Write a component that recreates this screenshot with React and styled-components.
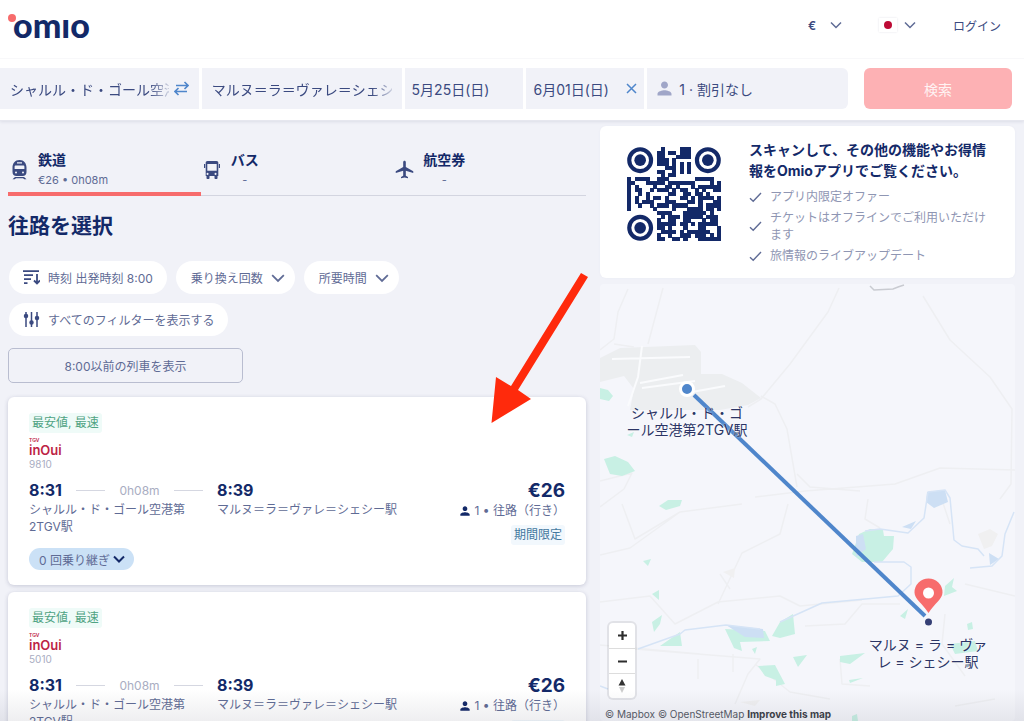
import React from "react";
import styled, { createGlobalStyle } from "styled-components";
import { MdPerson, MdLocalAirport } from "react-icons/md";

const c = {
  navy: "#132968",
  ink: "#3b4a80",
  text: "#5f6b95",
  muted: "#8f96b3",
  faint: "#a9adc2",
  line: "#d3d5e0",
  page: "#f1f2f8",
  coral: "#f76c6c",
  blue: "#4f86cb",
};

const Global = createGlobalStyle`
  * { box-sizing: border-box; }
  body { margin: 0; background: ${c.page}; }
  body, button, input, select {
    font-family: Inter, "Noto Sans CJK JP", sans-serif;
    color: ${c.text};
  }
  button, input, select { border: 0; margin: 0; padding: 0; background: none; font-size: 12px; }
  button { cursor: pointer; }
  h1, h2, p, ul { margin: 0; padding: 0; }
  svg { display: block; flex: none; }
`;

const Page = styled.div`
  position: relative;
  display: flex;
  flex-direction: column;
  height: 100vh;
  overflow: hidden;
`;

/* Header */
const Header = styled.header`
  background: #fff;
  border-bottom: 1px solid #e6e7ef;
  box-shadow: 0 1px 3px rgba(40, 45, 90, 0.1);
`;
const Nav = styled.nav`
  display: flex;
  align-items: center;
  height: 59px;
  padding: 0 23px 8px 8px;
  border-bottom: 1px solid #f8f8fa;
`;
const Logo = styled.a`
  position: relative;
  margin-right: auto;
  padding-left: 5px;
  color: ${c.navy};
  font-family: Lato, sans-serif;
  font-size: 34px;
  line-height: 36px;
  font-weight: 900;
  text-decoration: none;
  &::before {
    content: "";
    position: absolute;
    left: 0;
    top: 7px;
    width: 8px;
    height: 8px;
    border-radius: 50%;
    background: ${c.coral};
  }
`;
const Picker = styled.label`
  display: flex;
  align-items: center;
  gap: 14px;
  margin-right: 37px;
`;
const CurrencySelect = styled.select`
  appearance: none;
  width: 8px;
  color: ${c.ink};
  font-weight: 600;
`;
const FlagButton = styled.button`
  display: flex;
  align-items: center;
  gap: 7px;
  margin-right: 37px;
`;
const Flag = styled.span`
  display: grid;
  place-items: center;
  width: 18px;
  height: 14px;
  background: #fff;
  box-shadow: 0 0 2px #e2e2e8;
  &::after {
    content: "";
    width: 8px;
    height: 8px;
    border-radius: 50%;
    background: #bd0a35;
  }
`;
const Login = styled.a`
  font-size: 12px;
  color: ${c.ink};
  text-decoration: none;
`;
const SearchForm = styled.form`
  display: grid;
  grid-template-columns: 199fr 200fr 119fr 118fr 201fr 161fr;
  gap: 3px;
  padding: 9px 12px 11px 0;
`;
const Field = styled.div`
  display: flex;
  align-items: center;
  gap: 5px;
  height: 41px;
  min-width: 0;
  padding: 0 ${(p) => (p.$narrow ? 7 : 10)}px;
  background: ${c.page};
  border-radius: ${(p) => (p.$last ? "0 6px 6px 0" : "0")};
`;
const FieldInput = styled.input`
  flex: 1;
  width: 100%;
  min-width: 0;
  font-size: 14px;
  color: ${c.ink};
  outline: 0;
  mask-image: linear-gradient(to right, #000 calc(100% - 20px), rgba(0, 0, 0, 0.2));
`;
const FieldButton = styled.button`
  flex: 1;
  display: flex;
  align-items: center;
  gap: 4px;
  font-size: 14px;
  color: ${c.ink};
  white-space: nowrap;
`;
const IconButton = styled.button`
  display: grid;
  place-items: center;
  color: ${c.blue};
`;
const SearchButton = styled.button`
  height: 41px;
  margin-left: 13px;
  border-radius: 6px;
  background: #fdb1b4;
  color: #fff3f3;
  font-size: 14px;
`;

/* Columns */
const Main = styled.main`
  flex: 1;
  min-height: 0;
  display: grid;
  grid-template-columns: minmax(0, 578fr) minmax(0, 415fr);
  gap: 14px;
  padding: 0 9px 0 8px;
`;
const Results = styled.section`
  display: flex;
  flex-direction: column;
  min-height: 0;
  overflow-y: auto;
  scrollbar-width: none;
  margin: 0 -6px;
  padding: 0 6px;
`;
const Side = styled.aside`
  display: flex;
  flex-direction: column;
  gap: 6px;
  min-height: 0;
  padding-top: 5px;
`;

const Tabs = styled.div`
  flex: none;
  display: grid;
  grid-template-columns: repeat(3, 1fr);
  height: 75px;
  box-shadow: inset 0 -1px ${c.line};
`;
const Tab = styled.button`
  display: flex;
  align-items: center;
  gap: 10px;
  padding: 26px 0 0 2px;
  border-bottom: 4px solid ${(p) => (p.$active ? c.coral : "transparent")};
  color: ${c.ink};
  text-align: left;
`;
const TabIcon = styled.span`
  display: grid;
  justify-content: center;
  width: 18px;
`;
const TabText = styled.span`
  display: grid;
  line-height: 20px;
  justify-items: ${(p) => (p.$empty ? "center" : "start")};
  strong { font-size: 14px; color: ${c.navy}; }
  small { font-size: 11px; line-height: 20px; color: ${c.text}; }
`;
const Title = styled.h1`
  margin: 15px 0 20px;
  font-size: 21px;
  line-height: 30px;
  font-weight: 700;
  color: ${c.navy};
`;
const Filters = styled.div`
  display: flex;
  flex-wrap: wrap;
  gap: 9px;
  max-width: 420px;
  margin-left: 1px;
`;
const Chip = styled.button`
  display: flex;
  align-items: center;
  gap: 8px;
  height: 33px;
  padding: 0 ${(p) => (p.$menu ? "10px 0 15px" : "14px 0 14px")};
  border-radius: 17px;
  background: #fff;
`;
const EarlierButton = styled.button`
  flex: none;
  align-self: flex-start;
  width: 235px;
  height: 35px;
  margin: 12px 0 14px;
  border: 1px solid #b9bdd0;
  border-radius: 5px;
`;

/* Trip cards */
const Card = styled.article`
  flex: none;
  display: grid;
  grid-template-columns: 188px minmax(0, 1fr) auto;
  padding: 16px 21px 15px;
  margin-bottom: 7px;
  border-radius: 6px;
  background: #fff;
  box-shadow: 0 1px 4px rgba(50, 55, 100, 0.22);
`;
const CardHead = styled.div`
  grid-column: 1 / -1;
  display: flex;
  flex-direction: column;
  align-items: flex-start;
`;
const Tag = styled.span`
  padding: 0 3px;
  border-radius: 3px;
  font-size: 12px;
  line-height: 20px;
  color: ${(p) => (p.$deal ? "#45789f" : "#4fa383")};
  background: ${(p) => (p.$deal ? "#f2f8fd" : "#effbf8")};
`;
const Carrier = styled.span`
  display: grid;
  margin-top: 4px;
  color: #bd2345;
  font-size: 13px;
  line-height: 13px;
  font-weight: 600;
  small { font-size: 5px; line-height: 7px; }
`;
const TrainNo = styled.span`
  margin-bottom: 9px;
  font-size: 10px;
  line-height: 14px;
  color: ${c.faint};
`;
const Times = styled.div`
  display: flex;
  align-items: center;
  gap: 14px;
  padding-right: 14px;
  font-size: 12px;
  line-height: 21px;
  color: ${c.faint};
`;
const Time = styled.strong`
  font-size: 16px;
  color: ${c.navy};
`;
const Rule = styled.span`
  flex: 1;
  height: 1px;
  background: #d5d7e1;
`;
const Station = styled.p`
  padding-right: 24px;
  font-size: 12px;
  line-height: 17px;
`;
const Fare = styled.div`
  grid-column: 3;
  grid-row: 2 / span 2;
  display: flex;
  flex-direction: column;
  align-items: flex-end;
  font-size: 12px;
  line-height: 17px;
`;
const Price = styled.strong`
  font-size: 19px;
  line-height: 22px;
  color: ${c.navy};
`;
const FareNote = styled.span`
  display: flex;
  align-items: center;
  gap: 3px;
  margin-bottom: 6px;
  svg { color: ${c.navy}; }
`;
const Transfers = styled.button`
  justify-self: start;
  display: flex;
  align-items: center;
  gap: 3px;
  height: 22px;
  margin-top: 13px;
  padding: 0 9px 0 10px;
  border-radius: 11px;
  background: #cbe1f6;
  white-space: nowrap;
  svg { color: ${c.navy}; }
`;

/* App promotion */
const Promo = styled.section`
  display: flex;
  gap: 28px;
  padding: 13px 24px 14px 27px;
  border-radius: 6px;
  background: #fff;
  box-shadow: 0 0 2px #e9eaf2;
`;
const QrBox = styled.div`
  padding-top: 8px;
`;
const PromoTitle = styled.h2`
  margin-bottom: 7px;
  font-size: 14px;
  line-height: 21px;
  font-weight: 700;
  color: ${c.navy};
`;
const Perks = styled.ul`
  display: grid;
  gap: 4px;
  list-style: none;
`;
const Perk = styled.li`
  display: flex;
  align-items: center;
  gap: 8px;
  font-size: 12px;
  line-height: 17px;
  color: ${c.muted};
  svg { color: ${c.text}; }
`;

/* Map */
const MapBox = styled.section`
  position: relative;
  flex: 1;
  min-height: 0;
  overflow: hidden;
  border-radius: 4px;
  background: #f5f6fb;
`;
const MapLabel = styled.span`
  position: absolute;
  left: ${(p) => p.$x}px;
  top: ${(p) => p.$y}px;
  transform: translateX(-50%);
  font-size: 14px;
  line-height: 17px;
  color: #2c3566;
  text-align: center;
  white-space: nowrap;
  text-shadow: 0 0 2px #fff;
`;
const ZoomGroup = styled.div`
  position: absolute;
  left: 9px;
  bottom: 23px;
  display: grid;
  width: 26px;
  border-radius: 4px;
  background: #fff;
  box-shadow: 0 0 0 2px rgba(0, 0, 0, 0.08);
`;
const ZoomButton = styled.button`
  display: grid;
  place-items: center;
  height: 25px;
  color: #2d2d2d;
  & + & { border-top: 1px solid #ddd; }
`;
const Credits = styled.p`
  position: absolute;
  left: 5px;
  bottom: 0;
  font-size: 10px;
  line-height: 13px;
  a { color: #555a66; text-decoration: none; }
  a:last-child { font-weight: 700; color: #3b3e47; }
`;

const BottomFade = styled.div`
  position: absolute;
  inset: auto 0 0;
  height: 32px;
  background: linear-gradient(rgba(70, 72, 90, 0), rgba(70, 72, 90, 0.09));
  pointer-events: none;
`;
const Pointer = styled.svg`
  position: absolute;
  left: 490px;
  top: 272px;
  pointer-events: none;
`;

const Chevron = ({ size = 12, weight = 1.5 }) => (
  <svg width={size} height={size} viewBox="0 0 12 12" fill="none" stroke="currentColor" strokeWidth={weight}>
    <path d="M1 3.5 6 8.5 11 3.5" />
  </svg>
);
const Check = () => (
  <svg width="13" height="12" viewBox="0 0 13 12" fill="none" stroke="currentColor" strokeWidth="1.4">
    <path d="M1 7.2 4.2 10.2 12 2" />
  </svg>
);
const SwapIcon = () => (
  <svg width="15" height="15" viewBox="0 0 15 15" fill="none" stroke="currentColor" strokeWidth="1.6">
    <path d="M2 4.5H14M10.5 1 14 4.5 10.5 8M13 10.5H1M4.5 7 1 10.5 4.5 14" />
  </svg>
);
const CloseIcon = () => (
  <svg width="11" height="11" viewBox="0 0 11 11" fill="none" stroke="currentColor" strokeWidth="1.5">
    <path d="M1 1 10 10M10 1 1 10" />
  </svg>
);
const TrainIcon = () => (
  <svg width="15" height="20" viewBox="0 0 15 20" fill="currentColor" fillRule="evenodd">
    <path d="M7.5 0C3 0 .5 3.500.5 7.500V12C.5 14.500 2 16 4.500 16h6c2.500 0 4-1.500 4-4V7.500C14.500 3.500 12 0 7.500 0ZM5 2.200h5v1.200H5ZM3.800 5.500h7.400c.8 0 1.200.5 1.200 1.200V9H2.600V6.700c0-.7.4-1.200 1.200-1.200ZM4 11.500a1 1 0 1 1 0 2 1 1 0 0 1 0-2Zm7 0a1 1 0 1 1 0 2 1 1 0 0 1 0-2Z" />
    <path d="M3 17h9l2.500 2.300h-2.200L11 18.200H4L2.700 19.300H.5Z" />
  </svg>
);
const BusIcon = () => (
  <svg width="16" height="18" viewBox="0 0 16 18" fill="currentColor" fillRule="evenodd">
    <path d="M3.500 0h9C13.700 0 14.300.7 14.300 1.800V15H13.500v2c0 .6-.4 1-1 1h-1c-.6 0-1-.4-1-1v-2h-5v2c0 .6-.4 1-1 1h-1c-.6 0-1-.4-1-1v-2H1.700V1.800C1.700.7 2.300 0 3.500 0ZM3.300 3v6.800h9.400V3ZM4 12a1 1 0 1 0 0 1.800A1 1 0 0 0 4 12Zm8 0a1 1 0 1 0 0 1.800 1 1 0 0 0 0-1.800Z" />
    <path d="M0 3h1.200v4H0ZM14.800 3H16v4h-1.200Z" />
  </svg>
);
const SortIcon = () => (
  <svg width="17" height="15" viewBox="0 0 17 15" fill="none" stroke={c.ink} strokeWidth="1.800">
    <path d="M0 1.200H16M1 5.200H10M1 9.200H8M1 13.200H4.500M14 4V13M11 10.500 14 13.500 17 10.500" />
  </svg>
);
const SlidersIcon = () => (
  <svg width="17" height="15" viewBox="0 0 17 15" stroke={c.ink} strokeWidth="1.500" fill={c.ink}>
    <path d="M3 0V15M8.500 0V15M14 0V15" />
    <circle cx="3" cy="4" r="1.500" />
    <circle cx="8.500" cy="10.500" r="1.500" />
    <circle cx="14" cy="6" r="1.500" />
  </svg>
);

const qrRows = [
  ".........#....###........",
  "........##.##.###........",
  "........##...####........",
  "........###.#............",
  "........###.#.#.#........",
  "..........###.#.#........",
  "........##..#.#.#........",
  ".........#.##............",
  "#.####..###.......#####..",
  "##...#####.#######....#.#",
  "#.#....#..##.#...#.######",
  "#.##..#.###.#.##..#.#..##",
  "#..#.#.....##..##.##.#...",
  "#.#..#.##.#...##.#.####.#",
  "#.#.###...###...##.#...##",
  "#..#..#.###.####...#.####",
  "#......#....#...####.##.#",
  "........####...######.#..",
  ".........#.###.#####.###.",
  "........#..##..##...#.##.",
  "........#####.##.#.#####.",
  "........##.#...#...##...#",
  ".........####.#.######..#",
  "........#..#..###.###.#.#",
  "........##..##.#...######",
];
const QrCode = () => (
  <svg width="94" height="94" viewBox="0 0 25 25" fill={c.navy} role="img" aria-label="QR">
    <g shapeRendering="crispEdges">
      {qrRows.flatMap((row, y) =>
        [...row].map((cell, x) => cell === "#" && <rect key={`${x}-${y}`} x={x} y={y} width="1.100" height="1.100" />)
      )}
    </g>
    {[[3.5, 3.5], [21.5, 3.5], [3.5, 21.5]].map(([x, y]) => (
      <g key={`${x}-${y}`}>
        <circle cx={x} cy={y} r="2.900" fill="#fff" stroke={c.navy} strokeWidth="1.100" />
        <circle cx={x} cy={y} r="1.550" />
      </g>
    ))}
  </svg>
);

const MapDrawing = () => (
  <svg width="415" height="437" viewBox="0 0 415 437" fill="none" aria-hidden="true">
    <path fill="#eceef0" d="M0 74 20 64 95 61 101 68V90L122 90 142 99 161 114 148 121 120 126H30L34 105 24 92 0 98Z" />
    <g stroke="#fafbfd" strokeWidth="2">
      <path d="M42 62 38 93 28 122M40 99 83 91M42 104 95 97M92 108 125 102M12 75 90 73" />
    </g>
    <g stroke="#eeeff2" strokeWidth="1.500" strokeLinejoin="round">
      <path d="M28 5 18 28 14 55 0 66M63 4 48 60M14 60 34 63M239 4 228 28 190 80 161 115 148 123M161 112 175 120 187 145 197 203M323 12 350 56 390 93 412 125 411 200 400 215" />
      <path d="M155 213 205 207 295 200 340 184 415 186M197 190 210 203 260 207M0 197 32 189 24 205 0 223M22 220 35 255 80 228 142 220M0 271 30 264 80 228M188 220 180 250 142 269 118 320" />
      <path d="M0 318 50 312 75 340 118 318 180 312 200 322 262 316M35 365 160 375 148 390 135 420M0 361 100 370M205 342 245 340 262 320 300 320M345 330 342 360 365 392M365 300 415 312M155 380 190 408 230 415M355 422 395 415M268 215 265 235 280 244" />
      <path d="M98 375V395M133 370V388M240 375 242 400 270 402M340 210 350 240M120 290 130 305" />
    </g>
    <path stroke="#c9cbd1" strokeWidth="1.500" d="M270 2 274 6 293 5 298 3 304 1" />
    <g fill="#c8f0e4">
      <path d="M0 18 3 28Z M0 104 8 106 13 112 9 117 0 115ZM4 175 15 172 28 178 35 187 22 192 10 190ZM59 222 68 216H82L80 222 66 226ZM43 277 51 275 48 282ZM52 310 59 306 59 316ZM27 151 34 148 32 153Z" />
      <path d="M259 250 270 245 283 246 284 252 294 252 293 265 282 278H262L252 270ZM52 338 62 331 60 340 54 348ZM60 362 80 348 82 362ZM125 345 165 347 170 357 140 358 142 367 134 364ZM172 352 180 338 193 330 195 350 180 354ZM193 373 207 371 198 383ZM240 372 265 369 250 380 240 378ZM158 382 175 381 185 400 176 402 176 396 165 392ZM249 396 263 394 250 399ZM345 302 354 294 352 303 357 307 344 312ZM300 332 308 325 305 335ZM367 340 372 338 373 345 368 346ZM350 360 375 357 378 367 355 370ZM252 432 257 430 258 437H252ZM152 365 157 363 155 370Z" />
    </g>
    <g fill="#cddff4">
      <path d="M126 341 163 345 164 354 145 353ZM256 252 263 250 266 265 256 273ZM327 208 345 206 348 218 334 224 326 218ZM302 243 316 237 311 245ZM389 269 399 275 390 281Z" />
    </g>
    <g stroke="#d6e4f6" strokeWidth="1.500" strokeLinejoin="round">
      <path d="M38 365 80 350 85 346 126 341 160 345M180 338 222 319 298 312 311 300 311 283 304 278 274 278M265 247 280 245 308 249 324 234 328 208 345 206 350 214 354 256 362 262 378 265 384 272M414 228 405 250 402 272 392 282 370 284M0 402 8 405" />
    </g>
    <g fill="#f0f0f1">
      <path d="M378 250 390 245 398 250 392 262 384 265ZM123 288 135 284 134 294ZM140 418 160 416 155 422Z" />
    </g>
    <path stroke={c.blue} strokeWidth="4" d="M94 111 325 332" />
    <circle cx="87" cy="105" r="6.500" fill={c.blue} stroke="#fff" strokeWidth="3" />
    <path fill={c.coral} d="M328.500 329C322 319 314.500 315 314.500 308.500a14 14 0 0 1 28 0C342.500 315 335 319 328.500 329Z" />
    <circle cx="328.500" cy="309" r="5.500" fill="#fff" />
    <circle cx="328.500" cy="338" r="3.500" fill="#353f75" />
  </svg>
);

const tabs = [
  { name: "鉄道", note: "€26 • 0h08m", icon: <TrainIcon />, active: true },
  { name: "バス", note: "-", icon: <BusIcon /> },
  { name: "航空券", note: "-", icon: <MdLocalAirport size={21} /> },
];
const trips = ["9810", "5010"];

const Trip = ({ number }) => (
  <Card>
    <CardHead>
      <Tag>最安値, 最速</Tag>
      <Carrier><small>TGV</small>inOui</Carrier>
      <TrainNo>{number}</TrainNo>
    </CardHead>
    <div>
      <Times><Time>8:31</Time><Rule />0h08m<Rule /></Times>
      <Station>シャルル・ド・ゴール空港第2TGV駅</Station>
    </div>
    <div>
      <Times><Time>8:39</Time></Times>
      <Station>マルヌ＝ラ＝ヴァレ＝シェシー駅</Station>
    </div>
    <Fare>
      <Price>€26</Price>
      <FareNote><MdPerson size={14} />1 • 往路（行き）</FareNote>
      <Tag $deal>期間限定</Tag>
    </Fare>
    <Transfers type="button">0 回乗り継ぎ <Chevron weight={2} /></Transfers>
  </Card>
);

export default function App() {
  return (
    <Page>
      <Global />
      <Header>
        <Nav>
          <Logo href="#" aria-label="omio">omıo</Logo>
          <Picker>
            <CurrencySelect aria-label="通貨"><option>€</option></CurrencySelect>
            <Chevron />
          </Picker>
          <FlagButton type="button" aria-label="言語"><Flag /><Chevron /></FlagButton>
          <Login href="#">ログイン</Login>
        </Nav>
        <SearchForm onSubmit={(e) => e.preventDefault()}>
          <Field>
            <FieldInput aria-label="出発地" defaultValue="シャルル・ド・ゴール空港第2TGV駅" />
            <IconButton type="button" aria-label="入れ替え"><SwapIcon /></IconButton>
          </Field>
          <Field><FieldInput aria-label="目的地" defaultValue="マルヌ＝ラ＝ヴァレ＝シェシー駅" /></Field>
          <Field $narrow><FieldButton type="button">5月25日(日)</FieldButton></Field>
          <Field $narrow>
            <FieldButton type="button">6月01日(日)</FieldButton>
            <IconButton type="button" aria-label="復路を削除"><CloseIcon /></IconButton>
          </Field>
          <Field $narrow $last>
            <FieldButton type="button"><MdPerson size={21} color="#a0a6c8" />1 · 割引なし</FieldButton>
          </Field>
          <SearchButton type="submit">検索</SearchButton>
        </SearchForm>
      </Header>
      <Main>
        <Results>
          <Tabs role="tablist">
            {tabs.map((t) => (
              <Tab key={t.name} type="button" role="tab" aria-selected={!!t.active} $active={t.active}>
                <TabIcon>{t.icon}</TabIcon>
                <TabText $empty={!t.active}><strong>{t.name}</strong><small>{t.note}</small></TabText>
              </Tab>
            ))}
          </Tabs>
          <Title>往路を選択</Title>
          <Filters>
            <Chip type="button"><SortIcon />時刻 出発時刻 8:00</Chip>
            <Chip type="button" $menu>乗り換え回数<Chevron size={14} /></Chip>
            <Chip type="button" $menu>所要時間<Chevron size={14} /></Chip>
            <Chip type="button"><SlidersIcon />すべてのフィルターを表示する</Chip>
          </Filters>
          <EarlierButton type="button">8:00以前の列車を表示</EarlierButton>
          {trips.map((n) => <Trip key={n} number={n} />)}
        </Results>
        <Side>
          <Promo>
            <QrBox><QrCode /></QrBox>
            <div>
              <PromoTitle>スキャンして、その他の機能やお得情報をOmioアプリでご覧ください。</PromoTitle>
              <Perks>
                <Perk><Check />アプリ内限定オファー</Perk>
                <Perk><Check />チケットはオフラインでご利用いただけます</Perk>
                <Perk><Check />旅情報のライブアップデート</Perk>
              </Perks>
            </div>
          </Promo>
          <MapBox>
            <MapDrawing />
            <MapLabel $x={87} $y={120}>シャルル・ド・ゴ<br />ール空港第2TGV駅</MapLabel>
            <MapLabel $x={328} $y={352}>マルヌ = ラ = ヴァ<br />レ = シェシー駅</MapLabel>
            <ZoomGroup>
              <ZoomButton type="button" aria-label="拡大">
                <svg width="11" height="11" viewBox="0 0 11 11" stroke="currentColor" strokeWidth="2.200"><path d="M5.500 1V10M1 5.500H10" /></svg>
              </ZoomButton>
              <ZoomButton type="button" aria-label="縮小">
                <svg width="11" height="11" viewBox="0 0 11 11" stroke="currentColor" strokeWidth="2.200"><path d="M1 5.500H10" /></svg>
              </ZoomButton>
              <ZoomButton type="button" aria-label="北を上にする">
                <svg width="8" height="14" viewBox="0 0 8 14"><path d="M4 0 7.500 6.500H.5Z" fill="#333" /><path d="M4 14 7 8H1Z" fill="#ccc" /></svg>
              </ZoomButton>
            </ZoomGroup>
            <Credits>
              <a href="#">© Mapbox</a> <a href="#">© OpenStreetMap</a> <a href="#">Improve this map</a>
            </Credits>
          </MapBox>
        </Side>
      </Main>
      <BottomFade />
      <Pointer width="100" height="152" viewBox="490 272 100 152" fill="#ff2a0c" aria-hidden="true">
        <path d="M581 273 588 277 518 390 531 399 491.500 423 496 377 511 386Z" />
      </Pointer>
    </Page>
  );
}
